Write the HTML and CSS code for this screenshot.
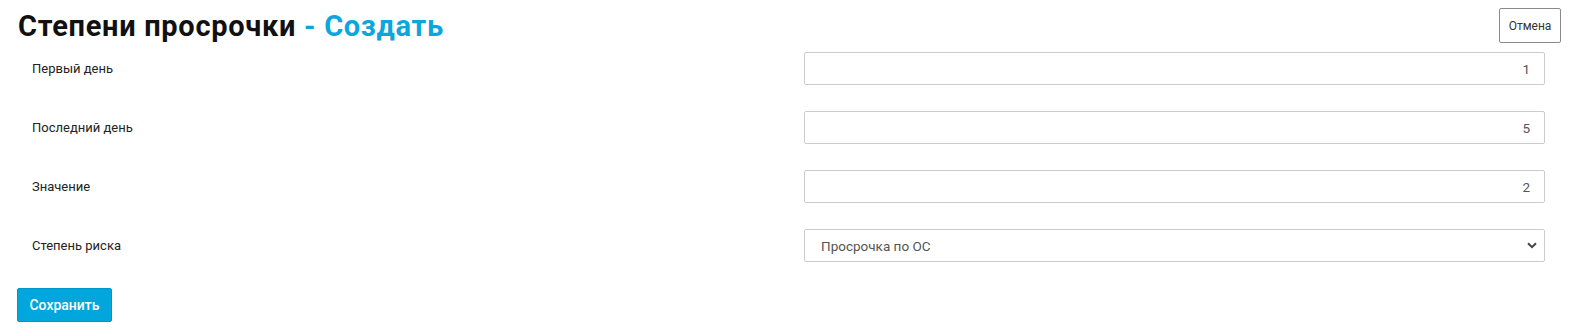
FILE: index.html
```html
<!DOCTYPE html>
<html lang="ru">
<head>
<meta charset="utf-8">
<link rel="stylesheet" href="styles.css">
</head>
<body>
<div class="page">
  <div class="header">
    <h1 class="title">Степени просрочки <span class="accent">- Создать</span></h1>
    <button class="btn-cancel" type="button">Отмена</button>
  </div>
  <form class="form">
    <div class="row">
      <label class="label">Первый день</label>
      <div class="field"><input class="input num" type="text" value="1"></div>
    </div>
    <div class="row">
      <label class="label">Последний день</label>
      <div class="field"><input class="input num" type="text" value="5"></div>
    </div>
    <div class="row">
      <label class="label">Значение</label>
      <div class="field"><input class="input num" type="text" value="2"></div>
    </div>
    <div class="row">
      <label class="label">Степень риска</label>
      <div class="field">
        <div class="select">
          <span class="select-text">Просрочка по ОС</span>
          <svg class="chev" width="10" height="7" viewBox="0 0 10 7"><path d="M1 1.2 L5 5.2 L9 1.2" fill="none" stroke="#444" stroke-width="2"/></svg>
        </div>
      </div>
    </div>
    <div class="actions">
      <button class="btn-save" type="button">Сохранить</button>
    </div>
  </form>
</div>
</body>
</html>
```
FILE: styles.css
```css
* { box-sizing: border-box; }
body {
  margin: 0;
  background: #fff;
  font-family: Roboto, "Liberation Sans", sans-serif;
  color: #222;
}
.page {
  padding: 0 11px 0 17px;
}
.header {
  display: flex;
  justify-content: space-between;
  align-items: flex-start;
  height: 52px;
}
.title {
  margin: 9px 0 0 1px;
  font-size: 29px;
  font-weight: 700;
  color: #111;
  letter-spacing: 0.7px;
  line-height: 34px;
}
.accent { color: #0aa6dc; }
.btn-cancel {
  margin-top: 8px;
  width: 62px;
  height: 35px;
  background: #fff;
  border: 1px solid #8a8a8a;
  border-radius: 2px;
  font-family: inherit;
  font-size: 12px;
  color: #333;
  padding: 0;
}
.form { display: flex; flex-direction: column; }
.row {
  display: grid;
  grid-template-columns: 50% 50%;
  align-items: center;
  height: 33px;
  margin-bottom: 26px;
}
.label {
  padding-left: 15px;
  font-size: 13px;
  color: #222;
}
.field { padding: 0 16px 0 15px; }
.input {
  display: block;
  width: 100%;
  height: 33px;
  border: 1px solid #ccc;
  border-radius: 2px;
  font-family: inherit;
  font-size: 13.5px;
  color: #555;
  padding: 0 14px;
}
.num { text-align: right; }
.select {
  display: flex;
  align-items: center;
  justify-content: space-between;
  height: 33px;
  border: 1px solid #ccc;
  border-radius: 2px;
  padding: 0 7px 0 16px;
  font-size: 13.5px;
  color: #555;
}
.actions { margin-top: 0; }
.btn-save {
  width: 95px;
  height: 34px;
  background: #00a6dc;
  border: 1px solid #0096c8;
  border-radius: 2px;
  color: #fff;
  font-family: inherit;
  font-size: 14px;
  font-weight: 500;
  padding: 0;
}
```
